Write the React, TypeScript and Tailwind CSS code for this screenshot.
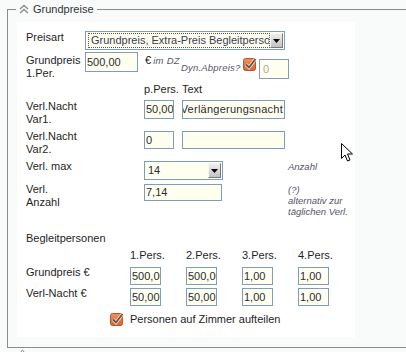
import React from "react";

const inputBase =
  "border border-[#7f9db9] bg-[#fffff0] text-[#2b2b36] text-[11px] leading-[13px] overflow-hidden whitespace-nowrap flex items-center";

function Field({ cls, value = "", muted = false }: { cls: string; value?: string; muted?: boolean }) {
  return (
    <div className={`${inputBase} ${cls}`}>
      <span className={muted ? "text-[#a8a8a8]" : ""}>{value}</span>
    </div>
  );
}

function ArrowBtn() {
  return (
    <div className="w-[13px] h-[15px] mr-[1px] flex items-center justify-center border border-t-[#f6f6f6] border-l-[#f6f6f6] border-r-[#7a7a7a] border-b-[#7a7a7a] bg-linear-to-b from-[#efefef] to-[#c2c2c2]">
      <svg width="7" height="4" viewBox="0 0 7 4">
        <path d="M0 0H7L3.5 4Z" fill="#000" />
      </svg>
    </div>
  );
}

function Check() {
  return (
    <svg width="15" height="14" viewBox="0 0 15 14" className="shrink-0">
      <defs>
        <linearGradient id="cbg" x1="0" y1="0" x2="0" y2="1">
          <stop offset="0" stopColor="#f2925f" />
          <stop offset="1" stopColor="#d9622f" />
        </linearGradient>
      </defs>
      <rect x="0.5" y="1.5" width="12" height="12" rx="2" fill="url(#cbg)" stroke="#b0572d" />
      <path d="M3 7.5 L6 10.5 L12.5 2" fill="none" stroke="#fbe3d5" strokeWidth="3.2" />
      <path d="M3 7.5 L6 10.5 L12.5 2" fill="none" stroke="#5f5550" strokeWidth="1.8" />
    </svg>
  );
}

export default function App() {
  return (
    <div className="w-[406px] h-[352px] overflow-hidden bg-[#f9fafa] relative font-['Liberation_Sans',Arial,sans-serif] text-[11px] text-[#1e1e1e]">
      <div className="pt-[2px] pl-[7px]">
        <fieldset className="w-[420px] h-[346px] border border-[#8c8c8c]">
          <legend className="ml-[8px] px-[3px] leading-[14px]">
            <span className="inline-flex items-center gap-[4px] text-[#333]">
              <svg width="10" height="10" viewBox="0 0 10 10">
                <path d="M1 5 L5 1.5 L9 5" fill="none" stroke="#8a8a8a" strokeWidth="1.4" />
                <path d="M1 9 L5 5.5 L9 9" fill="none" stroke="#8a8a8a" strokeWidth="1.4" />
              </svg>
              Grundpreise
            </span>
          </legend>
          <div className="ml-[9px] mt-[5px] w-[338px] h-[315px] bg-white pl-[9px] pt-[9px] flex flex-col">
            {/* Preisart */}
            <div className="flex h-[21px] shrink-0">
              <div className="w-[59px] leading-[13px]">Preisart</div>
              <div className="w-[200px] h-[19px] border border-[#7f9db9] bg-[#fffff0] flex items-center">
                <div className="ml-[2px] h-[15px] w-[182px] border border-dotted border-[#555] pl-[2px] flex items-center overflow-hidden whitespace-nowrap text-[#3a3a55]">
                  Grundpreis, Extra-Preis Begleitpersonen
                </div>
                <div className="ml-auto">
                  <ArrowBtn />
                </div>
              </div>
            </div>
            {/* Grundpreis 1.Per. */}
            <div className="flex h-[30px] shrink-0">
              <div className="w-[59px] mt-[2px] leading-[13px]">
                Grundpreis
                <br />
                1.Per.
              </div>
              <Field cls="w-[53px] h-[20px] pl-[1px]" value="500,00" />
              <div className="ml-[7px] w-[36px] mt-[2px] flex items-baseline leading-[13px] whitespace-nowrap">
                <span className="text-[#111]">€</span>
                <span className="ml-[2px] italic text-[9.5px] text-[#55556a] tracking-[0.3px]">im DZ</span>
              </div>
              <div className="w-[62px] mt-[10px] italic text-[9.5px] leading-[11px] text-[#55556a] tracking-[0.2px] whitespace-nowrap">
                Dyn.Abpreis?
              </div>
              <div className="mt-[5px]">
                <Check />
              </div>
              <Field cls="ml-[1px] mt-[7px] w-[30px] h-[20px] pl-[3px]" value="0" muted />
            </div>
            {/* p.Pers. Text */}
            <div className="flex h-[16px] shrink-0 pl-[118px] pt-[1px] leading-[13px]">
              <div className="w-[38px]">p.Pers.</div>
              <div>Text</div>
            </div>
            {/* Var1 */}
            <div className="flex h-[32px] shrink-0">
              <div className="w-[118px] mt-[2px] leading-[13px]">
                Verl.Nacht
                <br />
                Var1.
              </div>
              <Field cls="mt-[2px] w-[30px] h-[19px] pl-[1px]" value="50,00" />
              <div className={`${inputBase} ml-[8px] mt-[2px] w-[103px] h-[19px] justify-end pr-[1px]`}>
                <span className="tracking-[0.25px]">Verlängerungsnacht</span>
              </div>
            </div>
            {/* Var2 */}
            <div className="flex h-[30px] shrink-0">
              <div className="w-[118px] leading-[13px]">
                Verl.Nacht
                <br />
                Var2.
              </div>
              <Field cls="mt-[1px] w-[30px] h-[18px] pl-[1px]" value="0" />
              <Field cls="ml-[8px] mt-[1px] w-[103px] h-[18px]" />
            </div>
            {/* Verl. max */}
            <div className="flex h-[23px] shrink-0">
              <div className="w-[118px] leading-[13px]">Verl. max</div>
              <div className="mt-[1px] w-[79px] h-[19px] border border-[#7f9db9] bg-[#fffff0] flex items-center text-[#2b2b36]">
                <span className="pl-[3px]">14</span>
                <div className="ml-auto">
                  <ArrowBtn />
                </div>
              </div>
              <div className="ml-[65px] mt-[1px] italic text-[9.5px] leading-[11px] text-[#55556a]">Anzahl</div>
            </div>
            {/* Verl. Anzahl */}
            <div className="flex h-[48px] shrink-0">
              <div className="w-[118px] leading-[13px]">
                Verl.
                <br />
                Anzahl
              </div>
              <Field cls="mt-[1px] w-[78px] h-[17px] pl-[1px]" value="7,14" />
              <div className="ml-[66px] mt-[1px] italic text-[9.5px] leading-[11px] text-[#55556a] whitespace-nowrap">
                (?)
                <br />
                alternativ zur
                <br />
                täglichen Verl.
              </div>
            </div>
            {/* Begleitpersonen */}
            <div className="h-[17px] shrink-0 pt-[1px] leading-[13px]">Begleitpersonen</div>
            <div className="flex h-[18px] shrink-0 pl-[104px] pt-[1px] leading-[13px]">
              <div className="w-[56px]">1.Pers.</div>
              <div className="w-[56px]">2.Pers.</div>
              <div className="w-[56px]">3.Pers.</div>
              <div className="w-[56px]">4.Pers.</div>
            </div>
            <div className="flex h-[21px] shrink-0">
              <div className="w-[104px] leading-[13px]">Grundpreis €</div>
              <div className="flex gap-[25px] mt-[1px]">
                <Field cls="w-[31px] h-[18px] pl-[1px]" value="500,00" />
                <Field cls="w-[31px] h-[18px] pl-[1px]" value="500,00" />
                <Field cls="w-[31px] h-[18px] pl-[1px]" value="1,00" />
                <Field cls="w-[31px] h-[18px] pl-[1px]" value="1,00" />
              </div>
            </div>
            <div className="flex h-[24px] shrink-0">
              <div className="w-[104px] leading-[13px]">Verl-Nacht €</div>
              <div className="flex gap-[25px] mt-[1px]">
                <Field cls="w-[31px] h-[18px] pl-[1px]" value="50,00" />
                <Field cls="w-[31px] h-[18px] pl-[1px]" value="50,00" />
                <Field cls="w-[31px] h-[18px] pl-[1px]" value="1,00" />
                <Field cls="w-[31px] h-[18px] pl-[1px]" value="1,00" />
              </div>
            </div>
            <div className="flex items-center ml-[84px] mt-[1px] gap-[5px] leading-[13px]">
              <Check />
              <span>Personen auf Zimmer aufteilen</span>
            </div>
          </div>
        </fieldset>
        <div className="ml-[13px] mt-[1px]">
          <svg width="5" height="4" viewBox="0 0 5 4">
            <path d="M0.5 3.5 L2.5 1 L4.5 3.5" fill="none" stroke="#8a8a8a" strokeWidth="1" />
          </svg>
        </div>
      </div>
      <svg
        className="absolute left-[341px] top-[143px]"
        width="13"
        height="20"
        viewBox="0 0 13 20"
      >
        <path
          d="M0.5 0.5 L0.5 15.5 L4 12 L6.5 18 L9 17 L6.5 11 L11.5 11 Z"
          fill="#fff"
          stroke="#000"
          strokeWidth="1"
        />
      </svg>
    </div>
  );
}
